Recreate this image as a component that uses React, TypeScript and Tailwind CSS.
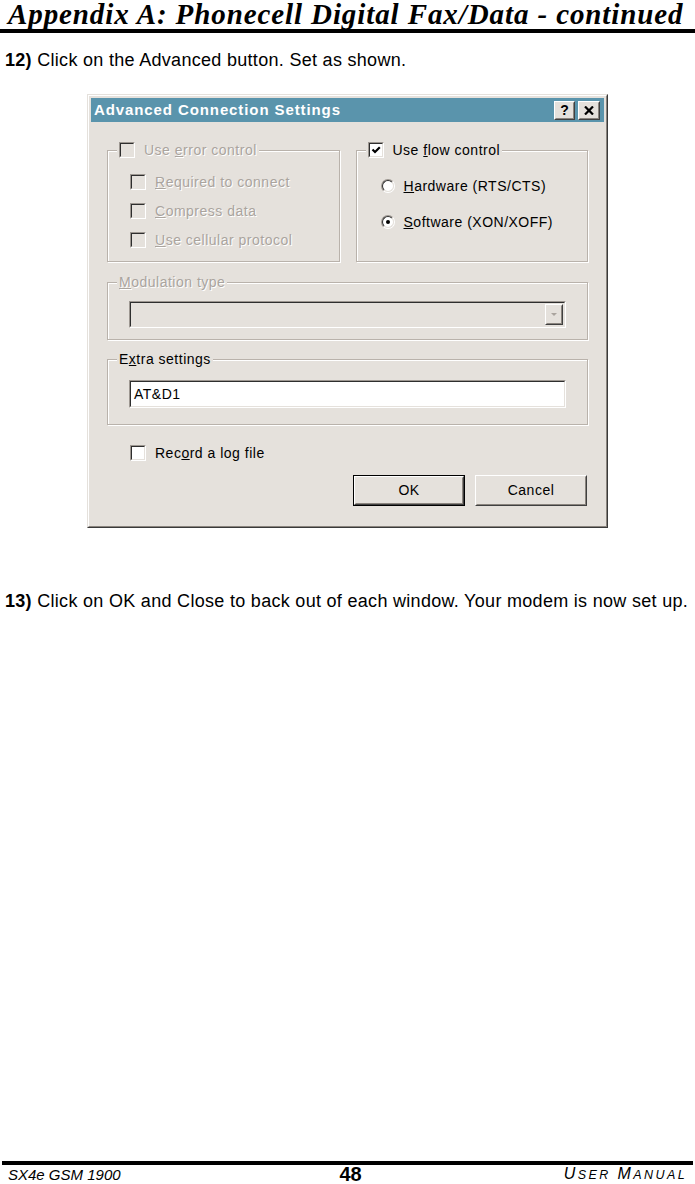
import type { ReactNode } from "react";

const dlg = "bg-[#e5e1dc]";
const disabledText = "text-[#aaa49e] [text-shadow:1px_1px_0_#fff]";

function Check({ checked = false, disabled = false }: { checked?: boolean; disabled?: boolean }) {
  return (
    <span className="flex h-[16px] w-[16px] shrink-0 border border-t-[#9d9791] border-l-[#9d9791] border-r-white border-b-white">
      <span
        className={`flex flex-1 items-center justify-center border border-t-[#2e2e2e] border-l-[#2e2e2e] border-r-[#e5e1dc] border-b-[#e5e1dc] ${
          disabled ? dlg : "bg-white"
        }`}
      >
        {checked && (
          <svg width="10" height="10" viewBox="0 0 10 10">
            <path d="M1.5 4.5 L4 7 L8.8 2.2" fill="none" stroke="#000" strokeWidth="2.2" />
          </svg>
        )}
      </span>
    </span>
  );
}

function Radio({ checked = false }: { checked?: boolean }) {
  return (
    <span className="flex h-[14px] w-[14px] shrink-0 rounded-full border border-t-[#9d9791] border-l-[#9d9791] border-r-white border-b-white">
      <span className="flex flex-1 items-center justify-center rounded-full border border-t-[#2e2e2e] border-l-[#2e2e2e] border-r-[#e5e1dc] border-b-[#e5e1dc] bg-white">
        {checked && <span className="h-[4px] w-[4px] rounded-full bg-black" />}
      </span>
    </span>
  );
}

function Row({ children, disabled = false, className = "" }: { children: ReactNode; disabled?: boolean; className?: string }) {
  return (
    <div
      className={`flex h-[16px] items-center gap-[9px] text-[14px] leading-[16px] tracking-[0.5px] ${
        disabled ? disabledText : "text-black"
      } ${className}`}
    >
      {children}
    </div>
  );
}

function Group({ legend, children, className = "" }: { legend: ReactNode; children: ReactNode; className?: string }) {
  return (
    <fieldset className="border border-[#b9b2ab] shadow-[inset_1px_1px_0_#fff,1px_1px_0_#fff]">
      <legend className={`ml-[9px] px-[2px] ${dlg}`}>{legend}</legend>
      <div className={className}>{children}</div>
    </fieldset>
  );
}

function Raised({ children, className = "" }: { children: ReactNode; className?: string }) {
  return (
    <div className={`flex border border-t-white border-l-white border-r-[#404040] border-b-[#404040] ${className}`}>
      <div className={`flex flex-1 items-center justify-center border border-t-[#e5e1dc] border-l-[#e5e1dc] border-r-[#8a847e] border-b-[#8a847e] ${dlg}`}>
        {children}
      </div>
    </div>
  );
}

function Sunken({ children, className = "" }: { children: ReactNode; className?: string }) {
  return (
    <div className={`flex border border-t-[#9d9791] border-l-[#9d9791] border-r-white border-b-white ${className}`}>
      <div className="flex flex-1 border border-t-[#2e2e2e] border-l-[#2e2e2e] border-r-[#e5e1dc] border-b-[#e5e1dc]">{children}</div>
    </div>
  );
}

function Dialog() {
  return (
    <div className="ml-[87px] w-[521px] border border-t-[#e5e1dc] border-l-[#e5e1dc] border-r-[#3a3a3a] border-b-[#3a3a3a]">
      <div className={`border border-t-white border-l-white border-r-[#8a847e] border-b-[#8a847e] p-[2px] ${dlg}`}>
        {/* title bar */}
        <div className="flex h-[24px] items-center bg-[#5a94ac] pl-[3px] pr-[4px]">
          <span className="flex-1 text-[15px] font-bold tracking-[0.9px] text-white">Advanced Connection Settings</span>
          <Raised className="h-[19px] w-[21px]">
            <span className="text-[14px] font-bold leading-none text-black">?</span>
          </Raised>
          <Raised className="ml-[3px] h-[19px] w-[22px]">
            <svg width="10" height="9" viewBox="0 0 10 9">
              <path d="M1 0.5 L9 8.5 M9 0.5 L1 8.5" stroke="#000" strokeWidth="2.2" />
            </svg>
          </Raised>
        </div>

        <div className="px-[16px] pb-[18px] pt-[20px]">
          <div className="grid grid-cols-2 gap-[16px]">
            <Group
              legend={
                <Row disabled>
                  <Check disabled />
                  <span>
                    Use <u>e</u>rror control
                  </span>
                </Row>
              }
              className="pb-[13px] pl-[22px]"
            >
              <div className="mt-[16px] flex flex-col gap-[13px]">
                <Row disabled>
                  <Check disabled />
                  <span>
                    <u>R</u>equired to connect
                  </span>
                </Row>
                <Row disabled>
                  <Check disabled />
                  <span>
                    <u>C</u>ompress data
                  </span>
                </Row>
                <Row disabled>
                  <Check disabled />
                  <span>
                    <u>U</u>se cellular protocol
                  </span>
                </Row>
              </div>
            </Group>
            <Group
              legend={
                <Row>
                  <Check checked />
                  <span>
                    Use <u>f</u>low control
                  </span>
                </Row>
              }
              className="pl-[24px]"
            >
              <div className="mt-[20px] flex flex-col gap-[20px]">
                <Row className="gap-[9px]">
                  <Radio />
                  <span>
                    <u>H</u>ardware (RTS/CTS)
                  </span>
                </Row>
                <Row className="gap-[9px]">
                  <Radio checked />
                  <span>
                    <u>S</u>oftware (XON/XOFF)
                  </span>
                </Row>
              </div>
            </Group>
          </div>

          <div className="mt-[12px]">
            <Group
              legend={
                <Row disabled>
                  <span>
                    <u>M</u>odulation type
                  </span>
                </Row>
              }
              className="px-[21px] pb-[11px]"
            >
              <Sunken className="mt-[11px] h-[27px]">
                <div className={`flex flex-1 items-center justify-end pr-[1px] ${dlg}`}>
                  <Raised className="h-[21px] w-[18px]">
                    <svg width="8" height="5" viewBox="0 0 8 5">
                      <path d="M1 1 L7 1 L4 4 Z" fill="#aaa49e" />
                    </svg>
                  </Raised>
                </div>
              </Sunken>
            </Group>
          </div>

          <div className="mt-[11px]">
            <Group
              legend={
                <Row>
                  <span>
                    E<u>x</u>tra settings
                  </span>
                </Row>
              }
              className="px-[21px] pb-[16px]"
            >
              <Sunken className="mt-[13px] h-[28px]">
                <div className="flex flex-1 items-center bg-white pl-[3px] text-[14px] tracking-[0.5px] text-black">AT&amp;D1</div>
              </Sunken>
            </Group>
          </div>

          <Row className="mt-[20px] pl-[23px]">
            <Check />
            <span>
              Rec<u>o</u>rd a log file
            </span>
          </Row>

          <div className="mt-[14px] flex justify-end gap-[10px] pr-[1px]">
            <div className="flex h-[31px] w-[112px] border border-black">
              <Raised className="flex-1">
                <span className="text-[14px] tracking-[0.5px] text-black">OK</span>
              </Raised>
            </div>
            <Raised className="h-[31px] w-[112px]">
              <span className="text-[14px] tracking-[0.5px] text-black">Cancel</span>
            </Raised>
          </div>
        </div>
      </div>
    </div>
  );
}

export default function App() {
  return (
    <div className="flex min-h-[1184px] w-[695px] flex-col bg-white font-['Liberation_Sans',Arial,sans-serif] text-black">
      <h1 className="whitespace-nowrap px-[8px] font-['Liberation_Serif',serif] text-[29px] font-bold italic leading-[28px] tracking-[0.9px]">
        Appendix A: Phonecell Digital Fax/Data - continued
      </h1>
      <div className="mt-[1px] h-[4px] bg-black" />

      <p className="mt-[18px] pl-[5px] text-[18px] leading-[18px] tracking-[0.3px]">
        <b>12)</b> Click on the Advanced button. Set as shown.
      </p>

      <div className="mt-[25px]">
        <Dialog />
      </div>

      <p className="mt-[64px] whitespace-nowrap pl-[5px] text-[18px] leading-[18px] tracking-[0.3px]">
        <b>13)</b> Click on OK and Close to back out of each window. Your modem is now set up.
      </p>

      <footer className="mt-auto">
        <div className="mx-[2px] h-[4px] bg-black" />
        <div className="flex h-[19px] items-center justify-between px-[8px] leading-[19px]">
          <span className="w-[200px] text-[15px] italic">SX4e GSM 1900</span>
          <span className="pl-[6px] text-[20px] font-bold">48</span>
          <span className="w-[200px] text-right text-[16px] italic tracking-[2.4px]">
            U<span className="text-[12.5px]">SER</span> M<span className="text-[12.5px]">ANUAL</span>
          </span>
        </div>
      </footer>
    </div>
  );
}
